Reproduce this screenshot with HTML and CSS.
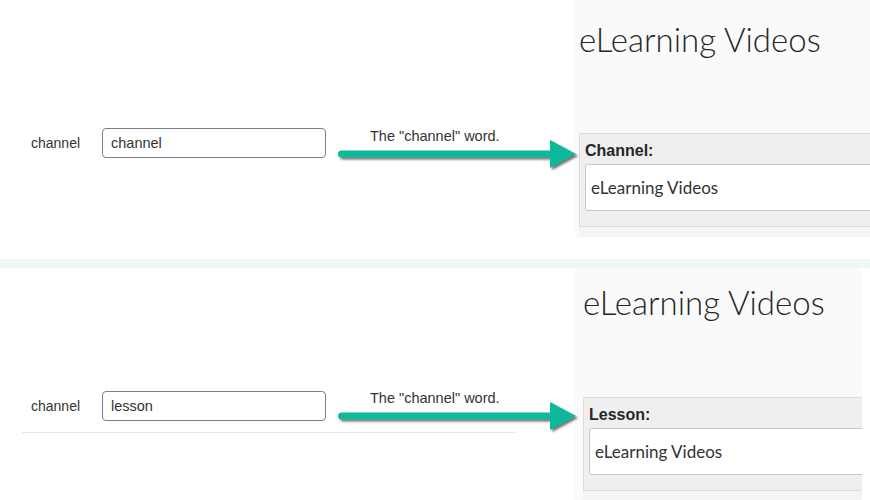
FILE: index.html
```html
<!DOCTYPE html>
<html lang="en">
<head>
    <meta charset="UTF-8">
    <meta name="viewport" content="width=device-width, initial-scale=1.0">
    <title>Channel word setting</title>
    <link rel="stylesheet" href="styles.css">
</head>
<body>
    <section class="panel panel-top">
        <div class="form-side">
            <div class="field">
                <span class="field-label">channel</span>
                <input class="field-input" type="text" value="channel">
            </div>
        </div>
        <div class="note">
            <p class="note-text">The "channel" word.</p>
            <svg class="note-arrow" width="244" height="36" viewBox="0 0 244 36">
                <defs>
                    <filter id="shadowTop" x="-10%" y="-40%" width="120%" height="180%">
                        <feDropShadow dx="2" dy="2" stdDeviation="1" flood-color="#333" flood-opacity="0.7"/>
                    </filter>
                </defs>
                <g filter="url(#shadowTop)" fill="#0bb89b">
                    <rect x="2" y="12.5" width="216" height="7" rx="3.5"/>
                    <polygon points="214,2 240,16 214,30"/>
                </g>
            </svg>
        </div>
        <div class="preview">
            <h1 class="preview-title">eLearning Videos</h1>
            <div class="preview-box">
                <label class="preview-label">Channel:</label>
                <div class="preview-input">eLearning Videos</div>
            </div>
            <div class="preview-next"></div>
        </div>
    </section>

    <div class="divider"></div>

    <section class="panel panel-bottom">
        <div class="form-side">
            <div class="field field-lined">
                <span class="field-label">channel</span>
                <input class="field-input" type="text" value="lesson">
            </div>
        </div>
        <div class="note">
            <p class="note-text">The "channel" word.</p>
            <svg class="note-arrow" width="244" height="36" viewBox="0 0 244 36">
                <defs>
                    <filter id="shadowBottom" x="-10%" y="-40%" width="120%" height="180%">
                        <feDropShadow dx="2" dy="2" stdDeviation="1" flood-color="#333" flood-opacity="0.7"/>
                    </filter>
                </defs>
                <g filter="url(#shadowBottom)" fill="#0bb89b">
                    <rect x="2" y="12.5" width="216" height="7" rx="3.5"/>
                    <polygon points="214,2 240,16 214,30"/>
                </g>
            </svg>
        </div>
        <div class="preview">
            <h1 class="preview-title">eLearning Videos</h1>
            <div class="preview-box">
                <label class="preview-label">Lesson:</label>
                <div class="preview-input">eLearning Videos</div>
            </div>
            <div class="preview-next"></div>
        </div>
    </section>
</body>
</html>
```

FILE: styles.css
```css
* {
    margin: 0;
    padding: 0;
    box-sizing: border-box;
}

body {
    width: 870px;
    height: 500px;
    overflow: hidden;
    background: #ffffff;
    font-family: "Liberation Sans", Arial, sans-serif;
    color: #333333;
}

.panel {
    position: relative;
    display: flex;
    align-items: flex-start;
}

.panel-top {
    height: 259px;
}

.panel-bottom {
    height: 232px;
}

.divider {
    height: 9px;
    background: #eef9f5;
}

/* left: the settings form */
.form-side {
    width: 575px;
    flex-shrink: 0;
}

.panel-top .form-side {
    padding-top: 128px;
}

.panel-bottom .form-side {
    padding-top: 123px;
}

.field {
    display: flex;
    align-items: center;
    width: 494px;
    margin-left: 22px;
}

.field-lined {
    padding-bottom: 11px;
    border-bottom: 1px solid #e6e6e6;
}

.field-label {
    width: 80px;
    padding-left: 9px;
    font-size: 14px;
}

.field-input {
    width: 224px;
    height: 30px;
    padding: 0 8px;
    border: 1px solid #76818d;
    border-radius: 4px;
    font-family: "Liberation Sans", Arial, sans-serif;
    font-size: 14.5px;
    color: #333333;
    background: #ffffff;
}

/* annotation drawn over the screenshot */
.note {
    position: absolute;
    left: 336px;
    z-index: 1;
}

.panel-top .note {
    top: 128px;
}

.panel-bottom .note {
    top: 122px;
}

.note-text {
    padding-left: 34px;
    font-size: 14.5px;
    line-height: 16px;
}

.note-arrow {
    display: block;
    margin-top: -6px;
}

/* right: the preview of the page */
.preview {
    overflow: hidden;
    background: #fafafa;
}

.panel-top .preview {
    flex: 1;
    padding: 19px 0 0 4px;
}

.panel-bottom .preview {
    width: 287px;
    height: 232px;
    padding: 14px 0 0 8px;
}

.preview-title {
    font-family: Lato, "Open Sans", sans-serif;
    font-weight: 300;
    font-size: 33px;
    line-height: 40px;
    color: #262626;
}

.preview-box {
    width: 420px;
    padding: 8px 0 15px 5px;
    background: #efefef;
    border: 1px solid #dcdcdc;
}

.panel-top .preview-box {
    margin-top: 74px;
}

.panel-bottom .preview-box {
    margin-top: 75px;
}

.preview-label {
    display: block;
    margin-bottom: 4px;
    font-size: 16px;
    font-weight: bold;
    line-height: 18px;
    color: #262626;
}

.preview-input {
    height: 47px;
    padding: 0 5px;
    background: #ffffff;
    border: 1px solid #c8c8c8;
    border-radius: 3px;
    font-family: Lato, "Open Sans", sans-serif;
    font-size: 17px;
    line-height: 45px;
    color: #333333;
}

.preview-next {
    width: 420px;
    height: 10px;
    background: #f4f4f4;
}
```
